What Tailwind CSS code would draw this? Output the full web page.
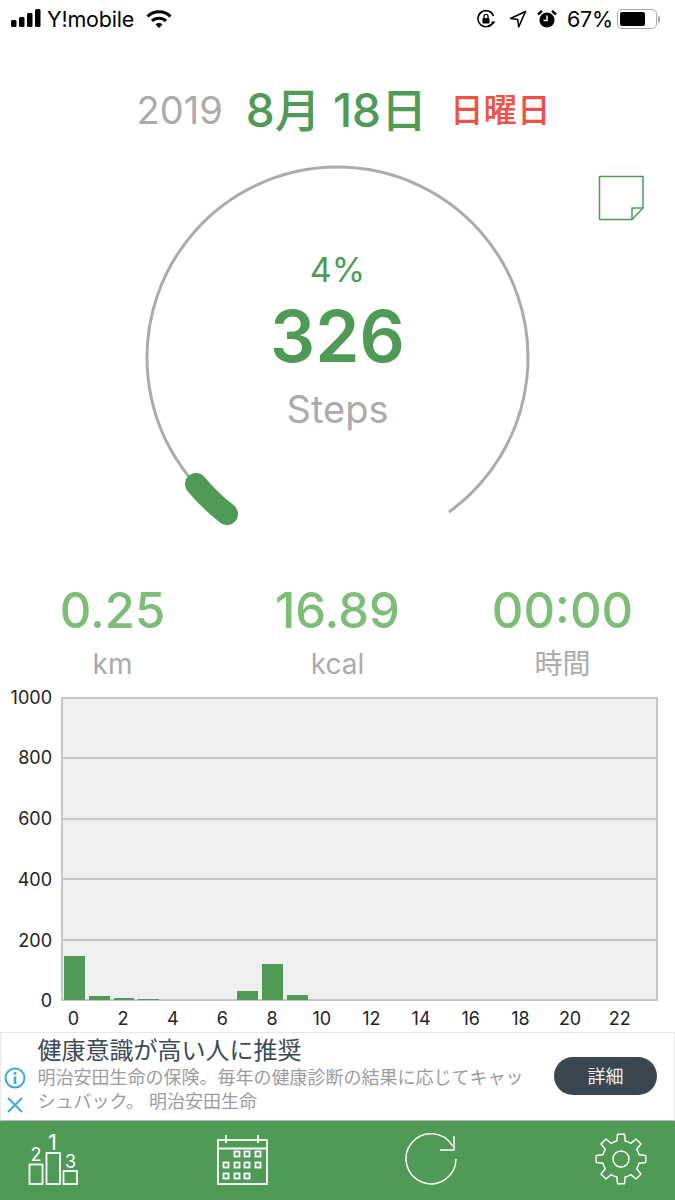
<!DOCTYPE html>
<html lang="ja">
<head>
    <meta charset="UTF-8">
    <meta name="viewport" content="width=device-width, initial-scale=1.0">
    <title>Steps</title>
    <script src="https://cdn.jsdelivr.net/npm/@tailwindcss/browser@4"></script>
</head>
<body class="bg-white font-['Inter','Noto_Sans_CJK_JP',sans-serif]">
<div class="flex flex-col w-[675px] h-[1200px] overflow-hidden">

    <!-- Status bar -->
    <header class="flex items-center justify-between h-[38px] pl-[11px] pr-[15px] text-black text-[21.500px] shrink-0">
        <div class="flex items-center">
            <svg width="31" height="20" viewBox="0 0 31 20" fill="black">
                <rect x="0" y="11" width="5.5" height="7" rx="1.5"/>
                <rect x="8" y="8" width="5.5" height="10" rx="1.5"/>
                <rect x="16" y="4" width="5.5" height="14" rx="1.5"/>
                <rect x="24" y="0" width="5.5" height="18" rx="1.5"/>
            </svg>
            <span class="ml-[5px] tracking-[-0.2px]">Y!mobile</span>
            <svg class="ml-[12px]" width="26" height="20" viewBox="0 0 26 20" fill="none" stroke="black" stroke-width="3">
                <path d="M1.5 7.5a16.5 16.5 0 0 1 23 0"/>
                <path d="M6 12a10 10 0 0 1 14 0"/>
                <path d="M13 19l-3.5-3.6a5 5 0 0 1 7 0z" fill="black" stroke="none"/>
            </svg>
        </div>
        <div class="flex items-center">
            <svg width="20" height="20" viewBox="0 0 20 20" fill="none" stroke="black" stroke-width="1.6">
                <path d="M17 13.5A8 8 0 1 1 17.5 7"/>
                <path d="M15 12.5h4.4l-2.2 3z" fill="black" stroke="none"/>
                <rect x="6.5" y="9" width="7" height="5.5" rx="0.8" fill="black" stroke="none"/>
                <path d="M8 9V7.3a2 2 0 0 1 4 0V9" stroke-width="1.3"/>
            </svg>
            <svg class="ml-[13px]" width="18" height="18" viewBox="0 0 18 18" fill="none" stroke="black" stroke-width="1.6" stroke-linejoin="round">
                <path d="M16.5 1.5L1.5 8.5l7.2 1 1 7.5z"/>
            </svg>
            <svg class="ml-[10px]" width="20" height="20" viewBox="0 0 20 20">
                <circle cx="10" cy="11" r="7.6" fill="black"/>
                <path d="M10 6.5V11.5H6.5" fill="none" stroke="white" stroke-width="1.5"/>
                <path d="M1 5.5L5 1.8M19 5.5L15 1.8" stroke="black" stroke-width="2.4" fill="none"/>
            </svg>
            <span class="ml-[10px] tracking-[-0.2px]">67%</span>
            <div class="ml-[4px] flex items-center">
                <div class="w-[40px] h-[20px] rounded-[5px] border-[1.5px] border-[#a8a8a8] p-[2px]">
                    <div class="w-[25px] h-full rounded-[2px] bg-black"></div>
                </div>
                <div class="w-[2px] h-[7px] ml-[1px] bg-[#a8a8a8] rounded-r-sm"></div>
            </div>
        </div>
    </header>

    <!-- Date -->
    <div class="flex items-center justify-center h-[101px] shrink-0 pt-[43px] pl-[12px]">
        <span class="text-[38px] text-[#ababab]">2019</span>
        <span class="ml-[23px] text-[46px] font-medium text-[#4f9a54]">8月 18日</span>
        <span class="ml-[23px] text-[33.500px] font-medium text-[#ee5244]">日曜日</span>
    </div>

    <!-- Gauge -->
    <section class="relative h-[444px] shrink-0">
        <svg class="absolute inset-0" width="675" height="444" viewBox="0 139 675 444" fill="none">
            <path d="M226 512A190.500 190.500 0 1 1 449 512" stroke="#ababab" stroke-width="3"/>
            <path d="M196 484Q209 500 227 514" stroke="#4f9a54" stroke-width="22" stroke-linecap="round"/>
            <path d="M599.500 176.500H643V208L632 219.500H599.500Z" stroke="#4f9a54" stroke-width="1.500" stroke-linejoin="round"/>
            <path d="M632 219.500V208H643" stroke="#4f9a54" stroke-width="1.500"/>
        </svg>
        <div class="relative flex flex-col items-center pt-[109px]">
            <div class="text-[34px] leading-[44px] text-[#4f9a54]">4%</div>
            <div class="text-[71px] leading-[84px] font-semibold text-[#4f9a54] mt-[2px]">326</div>
            <div class="text-[38px] leading-[50px] text-[#ababab] mt-[6px]">Steps</div>
        </div>
    </section>

    <!-- Stats -->
    <section class="grid grid-cols-3 h-[105px] shrink-0 text-center px-0">
        <div>
            <div class="text-[49px] leading-[56px] font-medium text-[#7dbd78]">0.25</div>
            <div class="text-[28px] leading-[40px] mt-[5px] text-[#ababab]">km</div>
        </div>
        <div>
            <div class="text-[49px] leading-[56px] font-medium text-[#7dbd78]">16.89</div>
            <div class="text-[28px] leading-[40px] mt-[5px] text-[#ababab]">kcal</div>
        </div>
        <div>
            <div class="text-[49px] leading-[56px] font-medium text-[#7dbd78]">00:00</div>
            <div class="text-[28px] leading-[40px] mt-[5px] text-[#ababab]">時間</div>
        </div>
    </section>

    <!-- Chart -->
    <section class="h-[344px] shrink-0 pt-[9px] text-[18px] text-[#222]">
        <div class="flex h-[304px]">
            <div class="flex flex-col justify-between w-[61px] pr-[9px] text-right shrink-0">
                <div class="h-0 flex items-center justify-end">1000</div>
                <div class="h-0 flex items-center justify-end">800</div>
                <div class="h-0 flex items-center justify-end">600</div>
                <div class="h-0 flex items-center justify-end">400</div>
                <div class="h-0 flex items-center justify-end">200</div>
                <div class="h-0 flex items-center justify-end">0</div>
            </div>
            <div class="relative w-[597px] border-2 border-[#c6c6c6] bg-[#efefef] flex flex-col">
                <div class="flex-1 border-b-2 border-[#c6c6c6]"></div>
                <div class="flex-1 border-b-2 border-[#c6c6c6]"></div>
                <div class="flex-1 border-b-2 border-[#c6c6c6]"></div>
                <div class="flex-1 border-b-2 border-[#c6c6c6]"></div>
                <div class="flex-1"></div>
                <div class="absolute top-0 -bottom-[1px] -left-[1px] right-0 grid grid-cols-24 items-end">
                    <div class="mx-[2px] h-[44px] bg-[#4f9a54]"></div>
                    <div class="mx-[2px] h-[4px] bg-[#4f9a54]"></div>
                    <div class="mx-[2px] h-[2px] bg-[#4f9a54]"></div>
                    <div class="mx-[2px] h-[1.500px] bg-[#4f9a54]"></div>
                    <div></div>
                    <div></div>
                    <div></div>
                    <div class="mx-[2px] h-[9px] bg-[#4f9a54]"></div>
                    <div class="mx-[2px] h-[36px] bg-[#4f9a54]"></div>
                    <div class="mx-[2px] h-[5px] bg-[#4f9a54]"></div>
                </div>
            </div>
        </div>
        <div class="grid grid-cols-12 w-[596px] ml-[61px] mt-[8px] leading-[20px]">
            <div class="w-1/2 flex justify-center">0</div>
            <div class="w-1/2 flex justify-center">2</div>
            <div class="w-1/2 flex justify-center">4</div>
            <div class="w-1/2 flex justify-center">6</div>
            <div class="w-1/2 flex justify-center">8</div>
            <div class="w-1/2 flex justify-center">10</div>
            <div class="w-1/2 flex justify-center">12</div>
            <div class="w-1/2 flex justify-center">14</div>
            <div class="w-1/2 flex justify-center">16</div>
            <div class="w-1/2 flex justify-center">18</div>
            <div class="w-1/2 flex justify-center">20</div>
            <div class="w-1/2 flex justify-center">22</div>
        </div>
    </section>

    <!-- Ad -->
    <aside class="flex h-[89px] shrink-0 border-[1.5px] border-[#e8e8e8] border-b-[#b5b5b5] pl-[1px] pr-[17px]">
        <div class="w-[25px] mr-[10.500px] flex flex-col items-center justify-end pb-[6px] shrink-0 gap-[7px]">
            <svg class="shrink-0" width="22" height="22" viewBox="0 0 22 22" fill="none" stroke="#3fa9d5" stroke-width="2">
                <circle cx="11" cy="11" r="9.500"/>
                <path d="M11 9.500V17" stroke-width="2.600"/>
                <path d="M11 5V7.600" stroke-width="2.600"/>
            </svg>
            <svg class="shrink-0" width="18" height="18" viewBox="0 0 18 18" fill="none" stroke="#3fa9d5" stroke-width="2">
                <path d="M2 2L16 16M16 2L2 16"/>
            </svg>
        </div>
        <div class="w-[500px] shrink-0">
            <div class="text-[24px] leading-[31px] mt-[2px] text-[#3c4a54] whitespace-nowrap">健康意識が高い人に推奨</div>
            <div class="text-[18px] leading-[24px] text-[#9c9c9c]">明治安田生命の保険。毎年の健康診断の結果に応じてキャッシュバック。 明治安田生命</div>
        </div>
        <div class="flex-1 flex items-center justify-end pb-[1px]">
            <button class="w-[103px] h-[38px] rounded-full bg-[#3a4750] text-[18px] text-[#eeeeee] shrink-0">詳細</button>
        </div>
    </aside>

    <!-- Tab bar -->
    <nav class="relative h-[79px] shrink-0 bg-[#4f9a54]">
        <svg width="675" height="79" viewBox="0 1121 675 79" fill="none" stroke="white" stroke-width="1.800">
            <!-- ranking -->
            <rect x="29.500" y="1164.500" width="13" height="19.500"/>
            <rect x="46.500" y="1153" width="13.500" height="31"/>
            <rect x="63.500" y="1171" width="13.500" height="13"/>
            <text x="52.500" y="1150" text-anchor="middle" font-size="22" fill="white" stroke="none">1</text>
            <text x="36" y="1161" text-anchor="middle" font-size="18" fill="white" stroke="none">2</text>
            <text x="70.500" y="1168" text-anchor="middle" font-size="18" fill="white" stroke="none">3</text>
            <!-- calendar -->
            <rect x="218" y="1140" width="49" height="44"/>
            <path d="M218 1148.500H267M226 1135V1143M258 1135V1143"/>
            <rect x="234.500" y="1151.500" width="5" height="5"/>
            <rect x="244.500" y="1151.500" width="5" height="5"/>
            <rect x="255.500" y="1151.500" width="5" height="5"/>
            <rect x="223.500" y="1162.500" width="5" height="5"/>
            <rect x="234.500" y="1162.500" width="5" height="5"/>
            <rect x="244.500" y="1162.500" width="5" height="5"/>
            <rect x="255.500" y="1162.500" width="5" height="5"/>
            <rect x="223.500" y="1173.500" width="5" height="5"/>
            <rect x="234.500" y="1173.500" width="5" height="5"/>
            <rect x="244.500" y="1173.500" width="5" height="5"/>
            <!-- refresh -->
            <path stroke-width="1.500" d="M456 1159A25 25 0 1 1 452.500 1146"/>
            <path stroke-width="1.500" d="M440 1150H454V1136"/>
            <!-- settings -->
            <g transform="translate(621 1159)" stroke-linejoin="round" stroke-width="1.500">
                <circle r="8"/>
                <path d="M-7.080-17.090L-4.160-18.030-3.480-24.760H3.480L4.160-18.030 7.080-17.090"/>
                <path transform="rotate(45)" d="M-7.080-17.090L-4.160-18.030-3.480-24.760H3.480L4.160-18.030 7.080-17.090"/>
                <path transform="rotate(90)" d="M-7.080-17.090L-4.160-18.030-3.480-24.760H3.480L4.160-18.030 7.080-17.090"/>
                <path transform="rotate(135)" d="M-7.080-17.090L-4.160-18.030-3.480-24.760H3.480L4.160-18.030 7.080-17.090"/>
                <path transform="rotate(180)" d="M-7.080-17.090L-4.160-18.030-3.480-24.760H3.480L4.160-18.030 7.080-17.090"/>
                <path transform="rotate(225)" d="M-7.080-17.090L-4.160-18.030-3.480-24.760H3.480L4.160-18.030 7.080-17.090"/>
                <path transform="rotate(270)" d="M-7.080-17.090L-4.160-18.030-3.480-24.760H3.480L4.160-18.030 7.080-17.090"/>
                <path transform="rotate(315)" d="M-7.080-17.090L-4.160-18.030-3.480-24.760H3.480L4.160-18.030 7.080-17.090"/>
            </g>
        </svg>
    </nav>
</div>
</body>
</html>
